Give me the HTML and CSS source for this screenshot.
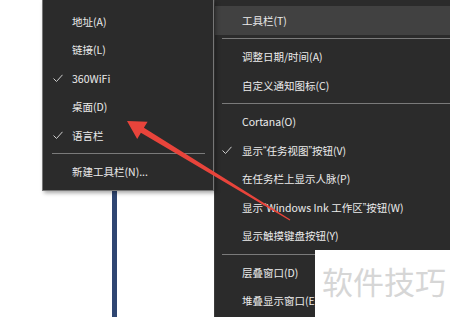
FILE: index.html
```html
<!DOCTYPE html>
<html lang="zh-CN">
<head>
  <meta charset="UTF-8" />
  <meta name="viewport" content="width=device-width, initial-scale=1.0"/>
  <title>任务栏菜单</title>
  <link rel="stylesheet" href="styles.css">
</head>
<body>

  <!-- Coluna esquerda: submenu + linha azul da área de trabalho -->
  <div class="coluna-esq">
    <div class="menu menu-sub">
      <div class="item"><span class="check"></span>地址(A)</div>
      <div class="item"><span class="check"></span>链接(L)</div>
      <div class="item"><span class="check"><svg width="10" height="9" viewBox="0 0 10 9"><path d="M0.5 4.5 L3.5 7.5 L9.5 0.8" /></svg></span>360WiFi</div>
      <div class="item"><span class="check"></span>桌面(D)</div>
      <div class="item"><span class="check"><svg width="10" height="9" viewBox="0 0 10 9"><path d="M0.5 4.5 L3.5 7.5 L9.5 0.8" /></svg></span>语言栏</div>
      <div class="sep"></div>
      <div class="item"><span class="check"></span>新建工具栏(N)...</div>
    </div>
    <div class="linha-azul"></div>
  </div>

  <!-- Menu principal -->
  <div class="menu menu-main">
    <div class="item hover"><span class="check"></span>工具栏(T)</div>
    <div class="sep"></div>
    <div class="item"><span class="check"></span>调整日期/时间(A)</div>
    <div class="item"><span class="check"></span>自定义通知图标(C)</div>
    <div class="sep"></div>
    <div class="item"><span class="check"></span>Cortana(O)</div>
    <div class="item"><span class="check"><svg width="10" height="9" viewBox="0 0 10 9"><path d="M0.5 4.5 L3.5 7.5 L9.5 0.8" /></svg></span>显示<span class="aspas">“</span>任务视图<span class="aspas">”</span>按钮(V)</div>
    <div class="item"><span class="check"></span>在任务栏上显示人脉(P)</div>
    <div class="item"><span class="check"></span>显示<span class="aspas">“</span>Windows Ink 工作区<span class="aspas">”</span>按钮(W)</div>
    <div class="item"><span class="check"></span>显示触摸键盘按钮(Y)</div>
    <div class="sep"></div>
    <div class="item"><span class="check"></span>层叠窗口(D)</div>
    <div class="item"><span class="check"></span>堆叠显示窗口(E)</div>
  </div>

  <!-- Seta vermelha -->
  <svg class="seta" width="450" height="317" viewBox="0 0 450 317">
    <polygon points="127,121 147.6,121.7 143.9,127.8 290.3,219.4 289.7,220.6 140.9,132.8 137.2,138.9" />
  </svg>

  <!-- Marca d'água -->
  <div class="marca">软件技巧</div>

</body>
</html>
```

FILE: styles.css
```css
/* Geral */
body {
  margin: 0;
  padding: 0;
  width: 450px;
  height: 317px;
  overflow: hidden;
  background: #fff;
  display: flex;
  font-family: "Noto Sans CJK SC", "Noto Sans", sans-serif;
  font-size: 10.5px;
  color: #ececec;
}

/* Coluna esquerda */
.coluna-esq {
  display: flex;
  flex-direction: column;
  width: 214px;
  flex-shrink: 0;
}

.linha-azul {
  flex: 1;
  width: 5px;
  margin-left: 112px;
  background: #2f4672;
}

/* Menus */
.menu {
  background: #2b2b2b;
}

.menu-sub {
  position: relative;
  z-index: 2;
  margin-left: 42px;
  width: 170px;
  padding: 7px 0 4px;
  border: 1px solid #777;
  border-top: none;
  box-shadow: 2px 2px 4px rgba(0,0,0,0.35);
}

.menu-main {
  flex: 1;
  padding-top: 6px;
  border-left: 1px solid #3c3c3c;
}

.item {
  display: flex;
  align-items: center;
  height: 28.5px;
  white-space: pre;
}

.item.hover {
  background: #414141;
}

.aspas {
  font-family: "Liberation Sans", sans-serif;
}

.check {
  display: flex;
  align-items: center;
  width: 19px;
  padding-left: 10px;
  height: 100%;
}

.menu-main .check {
  width: 20px;
  padding-left: 7px;
}

.check svg path {
  fill: none;
  stroke: #cfcfcf;
  stroke-width: 1;
}

.sep {
  height: 8px;
  display: flex;
  align-items: center;
  margin: 0 8px 0 9px;
}

.sep::after {
  content: "";
  flex: 1;
  height: 1px;
  background: #7a7a7a;
}

.menu-main .sep {
  margin: 0 0 0 7px;
}

/* Seta */
.seta {
  position: absolute;
  left: 0;
  top: 0;
  z-index: 3;
  pointer-events: none;
}

.seta polygon {
  fill: #e8443b;
}

/* Marca d'água */
.marca {
  position: absolute;
  left: 315px;
  top: 250px;
  width: 128px;
  height: 67px;
  padding-left: 7px;
  background: #fff;
  color: #d6d6d6;
  font-size: 31px;
  line-height: 62px;
  z-index: 4;
}
```
